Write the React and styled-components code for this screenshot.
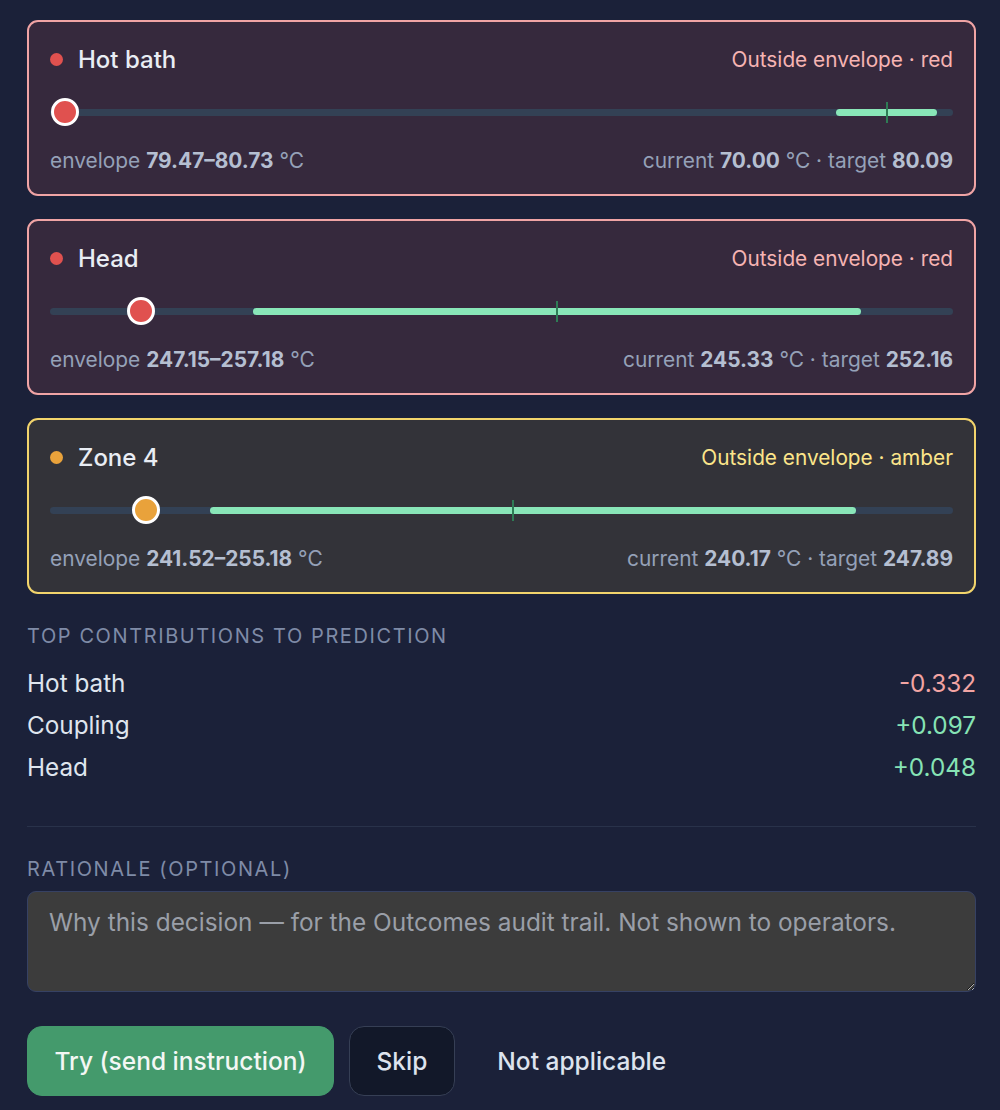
import React from "react";
import styled, { createGlobalStyle } from "styled-components";

const GlobalStyle = createGlobalStyle`
  html, body {
    margin: 0;
    padding: 0;
    background: #1b2139;
  }
  body {
    font-family: Inter, "Noto Sans", "Liberation Sans", sans-serif;
    color: #e6eaf2;
  }
  * { box-sizing: border-box; }
`;

const tones = {
  red: {
    bg: "#36293d",
    border: "#f0a4a5",
    dot: "#e0514f",
    status: "#f6b4b3",
  },
  amber: {
    bg: "#333339",
    border: "#f2d46c",
    dot: "#e9a23b",
    status: "#fce58a",
  },
};

const Page = styled.div`
  padding: 20px 24px 14px 27px;
  display: flex;
  flex-direction: column;
`;

const CardList = styled.div`
  display: flex;
  flex-direction: column;
  gap: 23px;
`;

const Card = styled.section`
  height: 176px;
  border: 2px solid ${(p) => tones[p.$tone].border};
  background: ${(p) => tones[p.$tone].bg};
  border-radius: 11px;
  padding: 20px 21px;
  display: flex;
  flex-direction: column;
`;

const CardHead = styled.div`
  height: 34px;
  display: flex;
  align-items: center;
  justify-content: space-between;
`;

const NameGroup = styled.div`
  display: flex;
  align-items: center;
  gap: 15px;
`;

const Dot = styled.span`
  width: 13px;
  height: 13px;
  border-radius: 50%;
  background: ${(p) => tones[p.$tone].dot};
`;

const Name = styled.span`
  font-size: 24px;
  font-weight: 500;
  color: #e9edf4;
`;

const Status = styled.span`
  font-size: 20.8px;
  color: ${(p) => tones[p.$tone].status};
`;

const Slider = styled.div`
  position: relative;
  height: 28px;
  margin-top: 22px;
  display: flex;
  align-items: center;
`;

const Track = styled.div`
  position: relative;
  width: 100%;
  height: 7px;
  border-radius: 4px;
  background: #334155;
`;

const Range = styled.div`
  position: absolute;
  top: 0;
  bottom: 0;
  border-radius: 4px;
  background: #89e6b8;
`;

const Tick = styled.div`
  position: absolute;
  top: -7px;
  width: 2px;
  height: 21px;
  margin-left: -1px;
  background: #2e7c55;
`;

const Thumb = styled.div`
  position: absolute;
  top: 0;
  width: 28px;
  height: 28px;
  margin-left: -14px;
  border-radius: 50%;
  border: 3px solid #ffffff;
  background: ${(p) => tones[p.$tone].dot};
`;

const Meta = styled.div`
  margin-top: 20px;
  height: 28px;
  display: flex;
  align-items: center;
  justify-content: space-between;
  font-size: 20.9px;
  color: #95a1b8;

  b {
    font-weight: 700;
    color: #b5bfd1;
  }
`;

const SectionLabel = styled.div`
  font-size: 20px;
  letter-spacing: 1.6px;
  text-transform: uppercase;
  color: #7f8ba7;
  line-height: 24px;
  margin-top: ${(p) => p.$top}px;
`;

const Contributions = styled.ul`
  list-style: none;
  margin: 14px 0 0;
  padding: 0;
`;

const ContribRow = styled.li`
  height: 42px;
  display: flex;
  align-items: center;
  justify-content: space-between;
  font-size: 24.3px;
  color: #dfe5ee;
`;

const ContribValue = styled.span`
  color: ${(p) => (p.$negative ? "#f2a4a3" : "#86e3b5")};
`;

const Divider = styled.hr`
  border: none;
  height: 1px;
  margin: 38px 0 0;
  background: #29324a;
`;

const Rationale = styled.textarea`
  margin-top: 10px;
  height: 101px;
  width: 100%;
  resize: vertical;
  border: 1.5px solid #364163;
  border-radius: 9px;
  background: #3c3c3c;
  padding: 15px 21px;
  font-family: inherit;
  font-size: 24.4px;
  line-height: 30px;
  color: #e6eaf2;
  outline: none;

  &::placeholder {
    color: #9a9fa8;
  }
`;

const Actions = styled.div`
  margin-top: 34px;
  display: flex;
  align-items: center;
  gap: 15px;
`;

const Button = styled.button`
  height: 70px;
  padding: 0 26.5px;
  border-radius: 15px;
  font-family: inherit;
  font-size: 24.5px;
  font-weight: 500;
  cursor: pointer;
  border: 1.5px solid
    ${(p) =>
      p.$variant === "primary"
        ? "#449a6c"
        : p.$variant === "secondary"
        ? "#363f55"
        : "transparent"};
  background: ${(p) =>
    p.$variant === "primary"
      ? "#449a6c"
      : p.$variant === "secondary"
      ? "#121829"
      : "transparent"};
  color: ${(p) => (p.$variant === "primary" ? "#f3f7f4" : "#dde3ee")};
`;

const zones = [
  {
    name: "Hot bath",
    tone: "red",
    thumb: 1.7,
    range: [87.0, 98.2],
    target: 92.7,
    envelope: "79.47–80.73",
    current: "70.00",
    targetValue: "80.09",
  },
  {
    name: "Head",
    tone: "red",
    thumb: 10.1,
    range: [22.5, 89.8],
    target: 56.2,
    envelope: "247.15–257.18",
    current: "245.33",
    targetValue: "252.16",
  },
  {
    name: "Zone 4",
    tone: "amber",
    thumb: 10.6,
    range: [17.7, 89.3],
    target: 51.3,
    envelope: "241.52–255.18",
    current: "240.17",
    targetValue: "247.89",
  },
];

const contributions = [
  { label: "Hot bath", value: "-0.332", negative: true },
  { label: "Coupling", value: "+0.097" },
  { label: "Head", value: "+0.048" },
];

function ZoneCard({ zone }) {
  const statusWord = zone.tone === "red" ? "red" : "amber";
  return (
    <Card $tone={zone.tone}>
      <CardHead>
        <NameGroup>
          <Dot $tone={zone.tone} />
          <Name>{zone.name}</Name>
        </NameGroup>
        <Status $tone={zone.tone}>Outside envelope · {statusWord}</Status>
      </CardHead>
      <Slider>
        <Track>
          <Range
            style={{
              left: `${zone.range[0]}%`,
              width: `${zone.range[1] - zone.range[0]}%`,
            }}
          />
          <Tick style={{ left: `${zone.target}%` }} />
        </Track>
        <Thumb $tone={zone.tone} style={{ left: `${zone.thumb}%` }} />
      </Slider>
      <Meta>
        <span>
          envelope <b>{zone.envelope}</b> °C
        </span>
        <span>
          current <b>{zone.current}</b> °C · target <b>{zone.targetValue}</b>
        </span>
      </Meta>
    </Card>
  );
}

export default function App() {
  return (
    <>
      <GlobalStyle />
      <Page>
        <CardList>
          {zones.map((z) => (
            <ZoneCard key={z.name} zone={z} />
          ))}
        </CardList>

        <SectionLabel $top={30}>Top contributions to prediction</SectionLabel>
        <Contributions>
          {contributions.map((c) => (
            <ContribRow key={c.label}>
              <span>{c.label}</span>
              <ContribValue $negative={c.negative}>{c.value}</ContribValue>
            </ContribRow>
          ))}
        </Contributions>

        <Divider />

        <SectionLabel $top={30}>Rationale (optional)</SectionLabel>
        <Rationale placeholder="Why this decision — for the Outcomes audit trail. Not shown to operators." />

        <Actions>
          <Button $variant="primary">Try (send instruction)</Button>
          <Button $variant="secondary">Skip</Button>
          <Button $variant="ghost">Not applicable</Button>
        </Actions>
      </Page>
    </>
  );
}
